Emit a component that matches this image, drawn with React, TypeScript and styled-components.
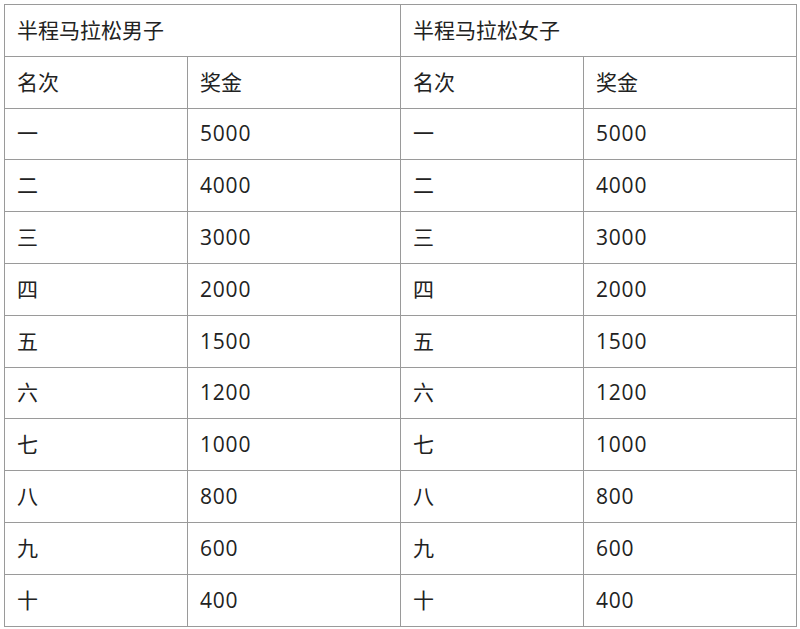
import React from "react";
import styled, { createGlobalStyle } from "styled-components";

const GlobalStyle = createGlobalStyle`
  html, body {
    margin: 0;
    padding: 0;
    background: #fff;
  }
  body {
    font-family: "Open Sans", "Noto Sans CJK SC", sans-serif;
    color: #222;
  }
`;

const Page = styled.div`
  padding: 4px 0 0 4px;
`;

const Table = styled.table`
  border-collapse: collapse;
  table-layout: fixed;
  width: 792px;
  border: 1.5px solid #9a9a9a;
`;

const Cell = styled.td<{ $num?: boolean }>`
  height: 51.8px;
  padding: 0 0 0 12px;
  border: 1.5px solid #9a9a9a;
  font-size: 21px;
  line-height: 1;
  letter-spacing: ${(p) => (p.$num ? "0.8px" : "0")};
  text-align: left;
  vertical-align: middle;
  box-sizing: border-box;
`;

const NarrowCol = styled.col`
  width: 183px;
`;

const WideCol = styled.col`
  width: 213px;
`;

const rows: [string, string][] = [
  ["一", "5000"],
  ["二", "4000"],
  ["三", "3000"],
  ["四", "2000"],
  ["五", "1500"],
  ["六", "1200"],
  ["七", "1000"],
  ["八", "800"],
  ["九", "600"],
  ["十", "400"],
];

export default function App() {
  return (
    <>
      <GlobalStyle />
      <Page>
        <Table>
          <colgroup>
            <NarrowCol />
            <WideCol />
            <NarrowCol />
            <WideCol />
          </colgroup>
          <tbody>
            <tr>
              <Cell colSpan={2}>半程马拉松男子</Cell>
              <Cell colSpan={2}>半程马拉松女子</Cell>
            </tr>
            <tr>
              <Cell>名次</Cell>
              <Cell>奖金</Cell>
              <Cell>名次</Cell>
              <Cell>奖金</Cell>
            </tr>
            {rows.map(([rank, prize]) => (
              <tr key={rank}>
                <Cell>{rank}</Cell>
                <Cell $num>{prize}</Cell>
                <Cell>{rank}</Cell>
                <Cell $num>{prize}</Cell>
              </tr>
            ))}
          </tbody>
        </Table>
      </Page>
    </>
  );
}
